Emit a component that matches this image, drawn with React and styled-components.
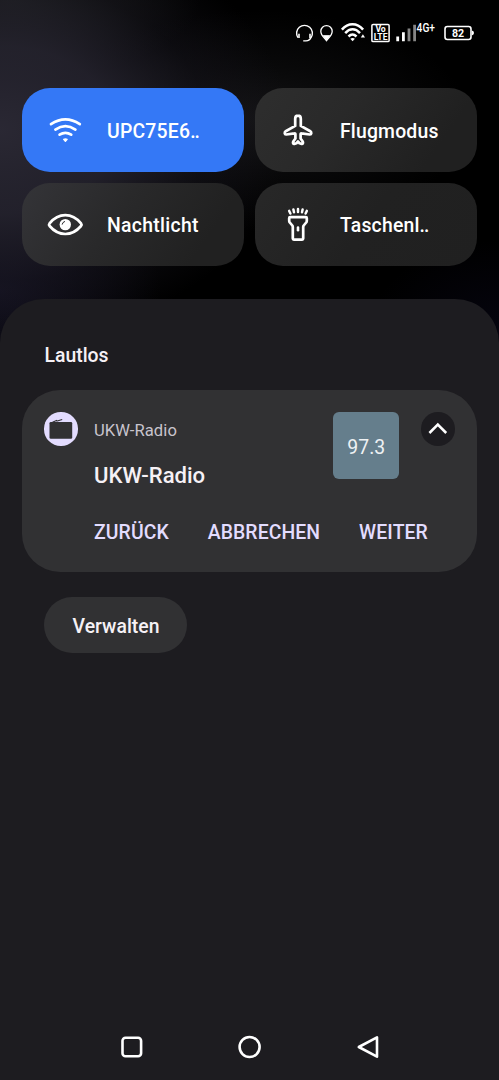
import React from 'react';
import styled, { createGlobalStyle } from 'styled-components';

const GlobalStyle = createGlobalStyle`
  * { box-sizing: border-box; }
  body {
    margin: 0;
    background: #1d1c20;
    font-family: Roboto, "Liberation Sans", sans-serif;
    -webkit-font-smoothing: antialiased;
  }
  svg { display: block; flex: none; }
  button {
    border: 0;
    padding: 0;
    background: none;
    font: inherit;
    color: inherit;
  }
`;

const Screen = styled.div`
  width: 499px;
  height: 1080px;
  overflow: hidden;
  display: flex;
  flex-direction: column;
  color: #fff;
  background:
    radial-gradient(ellipse 290px 210px at 0px 130px, rgba(44, 42, 54, 0.95) 0%, rgba(40, 38, 50, 0.82) 40%, rgba(26, 24, 34, 0.4) 72%, transparent 100%),
    radial-gradient(ellipse 210px 110px at 260px 120px, rgba(26, 26, 28, 0.75) 0%, rgba(18, 18, 20, 0.45) 50%, transparent 100%),
    radial-gradient(ellipse 160px 120px at 0px 290px, rgba(24, 22, 40, 0.8) 0%, transparent 100%),
    radial-gradient(ellipse 190px 80px at 10px 0px, rgba(34, 36, 36, 0.8) 0%, transparent 100%),
    radial-gradient(ellipse 130px 90px at 499px 330px, rgba(6, 5, 16, 0.9) 0%, transparent 100%),
    #000;
`;

const StatusBar = styled.header`
  height: 88px;
  flex: none;
  display: flex;
  justify-content: flex-end;
  align-items: flex-start;
  padding: 23px 24px 0 0;
`;

const StatusIcon = styled.svg`
  height: 20px;
  width: ${(p) => p.$w}px;
  margin-left: ${(p) => p.$gap || 0}px;
  overflow: visible;
  fill: none;
  stroke: #fff;
`;

const StatusText = styled.text`
  fill: #fff;
  stroke: none;
  font-weight: ${(p) => p.$weight || 700};
  font-size: ${(p) => p.$size}px;
`;

const TileGrid = styled.section`
  flex: none;
  display: grid;
  grid-template-columns: 222px 222px;
  grid-template-rows: 84px 83px;
  gap: 11px;
  padding: 0 22px;
`;

const tileFills = {
  active: '#3478f6',
  left: 'linear-gradient(125deg, #343438 0%, #29292a 42%, #212121 80%)',
  top: 'linear-gradient(125deg, #2e2e2e 0%, #292929 38%, #202020 80%)',
  plain: 'linear-gradient(125deg, #282828 0%, #212121 50%, #202020 100%)',
};

const Tile = styled.button`
  display: flex;
  align-items: center;
  border-radius: 28px;
  padding-left: 21px;
  background: ${(p) => tileFills[p.$fill]};
`;

const TileIcon = styled.svg`
  width: 44px;
  height: 44px;
  fill: none;
  stroke: #fff;
  stroke-width: 2.7;
  stroke-linecap: round;
  stroke-linejoin: round;
`;

const TileLabel = styled.span`
  margin-left: 20px;
  padding-top: 2.4px;
  font-size: 19.4px;
  font-weight: 500;
  letter-spacing: ${(p) => p.$spacing ?? 0.3}px;
  white-space: nowrap;
`;

const Dots = styled.span`
  letter-spacing: -1.1px;
`;

const Sheet = styled.main`
  flex: 1;
  margin-top: 33px;
  border-radius: 44px 44px 0 0;
  background: #1d1c20;
  display: flex;
  flex-direction: column;
  align-items: flex-start;
`;

const SectionTitle = styled.h2`
  margin: 45px 0 0 44.5px;
  font-size: 19.4px;
  line-height: 24px;
  font-weight: 500;
  color: #f6f1f6;
`;

const Notification = styled.article`
  width: 455px;
  height: 182px;
  margin: 22.4px 0 0 22px;
  padding: 22px 22px 0;
  border-radius: 38px;
  background: #313133;
  display: grid;
  grid-template-columns: 50px 238.5px 66.5px 33px;
  grid-template-rows: 97px 46px;
`;

const AppBadge = styled.div`
  width: 33.5px;
  height: 33.5px;
  border-radius: 50%;
  background: #e3dcff;
`;

const NotificationText = styled.div`
  display: flex;
  flex-direction: column;
`;

const AppName = styled.span`
  margin-top: 6.6px;
  font-size: 16.6px;
  line-height: 24px;
  letter-spacing: 0.1px;
  color: #c8c4cd;
`;

const NotificationTitle = styled.h3`
  margin: 18.2px 0 0;
  font-size: 22.1px;
  line-height: 28px;
  font-weight: 500;
  color: #f6f1f6;
`;

const Frequency = styled.div`
  height: 66.5px;
  border-radius: 6px;
  background: #657e8c;
  display: flex;
  align-items: center;
  justify-content: center;
  padding: 3.6px 0 0 1px;
  font-size: 19.4px;
  color: #eef1f3;
`;

const CollapseButton = styled.button`
  width: 33.5px;
  height: 33.5px;
  margin-left: 22px;
  border-radius: 50%;
  background: #1d1c20;
`;

const Actions = styled.div`
  grid-column: 2 / -1;
  display: flex;
  align-items: center;
  gap: 38.9px;
`;

const Action = styled.button`
  font-size: 19.4px;
  font-weight: 500;
  letter-spacing: 0.1px;
  color: #e3dcff;
  white-space: nowrap;
`;

const ManageButton = styled.button`
  width: 143px;
  height: 55.6px;
  margin: 25px 0 0 44px;
  padding: 2px 0 0 1px;
  border-radius: 28px;
  background: #313133;
  font-size: 19.4px;
  font-weight: 500;
  color: #f6f1f6;
`;

const NavBar = styled.nav`
  width: 100%;
  height: 67px;
  margin-top: auto;
  display: flex;
  justify-content: center;
  align-items: center;
  gap: 94px;
`;

const NavIcon = styled.svg`
  width: 24px;
  height: 24px;
  fill: none;
  stroke: #fff;
  stroke-width: 2.6;
  stroke-linejoin: round;
`;

function StatusIcons() {
  return (
    <StatusBar>
      <StatusIcon $w={17} viewBox="0 0 17 20" strokeWidth="1.4">
        <path d="M1.9 14.6A7.9 7.9 0 1 1 15.1 14.6" />
        <path d="M3 10.8v4.2M14 10.8v4.2" strokeWidth="1.6" />
        <path d="M15.1 14.3C14.2 16.8 12.6 17.9 10 17.9H7.2" />
      </StatusIcon>
      <StatusIcon $w={13} $gap={6.5} viewBox="0 0 13 20" strokeWidth="1.3">
        <path d="M6.5 17.6C5 15.4.8 12.6.8 8.3a5.7 5.7 0 0 1 11.4 0c0 4.3-4.2 7.1-5.7 9.3z" />
        <path d="M3.2 12.6h6.6L6.5 17.4z" fill="#fff" strokeWidth=".8" />
      </StatusIcon>
      <StatusIcon $w={24} $gap={8.5} viewBox="0 0 24 20" strokeWidth="2.5">
        <path d="M.9 6.6C7-.6 16-.6 22.1 6.6" />
        <path d="M4.2 10.1c4.6-5.1 10.2-5.1 14.8 0" />
        <path d="M7.5 13.5c2.7-2.7 5.3-2.7 8 0" />
        <path d="M9.3 15.8q2.3-1.6 4.6 0l-2.3 2.5z" fill="#fff" stroke="none" />
        <path d="M19.8 14.6h4.2l-2.1-3.4z" fill="#fff" stroke="none" />
      </StatusIcon>
      <StatusIcon $w={19} $gap={6} viewBox="0 0 19 20" strokeWidth="1.5">
        <rect x=".9" y="1.4" width="17.2" height="17.2" rx="1.2" />
        <StatusText $size={8.2} x="4.4" y="8.9" textLength="10.4" lengthAdjust="spacingAndGlyphs">Vo</StatusText>
        <StatusText $size={9} x="2.7" y="17" textLength="13.8" lengthAdjust="spacingAndGlyphs">LTE</StatusText>
      </StatusIcon>
      <StatusIcon $w={40} $gap={6} viewBox="0 0 40 20" strokeWidth="2.8">
        <path d="M1.7 18.3v-4.8M7.4 18.3v-9" />
        <path d="M13 18.3V5.6M18.6 18.3V1.8" stroke="#858585" />
        <StatusText $size={12.2} $weight={500} x="20.6" y="9" textLength="18.4" lengthAdjust="spacingAndGlyphs">4G+</StatusText>
      </StatusIcon>
      <StatusIcon $w={31} $gap={8} viewBox="0 0 31 20" strokeWidth="1.6">
        <rect x="1" y="3.5" width="26" height="13" rx="2.4" />
        <path d="M27.8 7.6q2.2.4 2.2 2.4t-2.2 2.4z" fill="#fff" stroke="none" />
        <StatusText $size={11.2} x="8" y="14.1" textLength="12.2" lengthAdjust="spacingAndGlyphs">82</StatusText>
      </StatusIcon>
    </StatusBar>
  );
}

const WifiIcon = () => (
  <TileIcon viewBox="0 0 44 44">
    <path d="M8 16.2q14.4-9.6 28.8 0" />
    <path d="M12.4 21.6q10-6.8 20 0" />
    <path d="M16.6 26.7q5.8-3.8 11.6 0" />
    <path d="M20.7 31.4q1.7-.9 3.4 0l-1.7 1.9z" fill="#fff" strokeWidth="1.4" />
  </TileIcon>
);

const PlaneIcon = () => (
  <TileIcon viewBox="0 0 44 44">
    <path d="M22 7.7c-1.9 0-2.8 1.2-2.8 3v7.2L9.7 23.2c-1.5.9-1.3 3.4.5 3.3l8.4-1.2c.5-.1.8.2.8.7v4.4l-2.1 3.1c-.7 1.3-.2 2.5 1 2.4l2.1-.6 1.6-1.8 1.6 1.8 2.1.6c1.2.1 1.7-1.1 1-2.4l-2.1-3.1V26c0-.5.3-.8.8-.7l8.4 1.2c1.8.1 2-2.4.5-3.3l-9.5-5.3v-7.2c0-1.8-.9-3-2.8-3z" />
  </TileIcon>
);

const EyeIcon = () => (
  <TileIcon viewBox="0 0 44 44">
    <path d="M6.6 20.4C11.2 14.8 16 12.2 22.3 12.2S33.4 14.8 38 20.4q1 1.3 0 2.6C33.4 28.4 28.6 31 22.3 31S11.2 28.4 6.6 23q-1-1.3 0-2.6z" />
    <circle cx="22.3" cy="21.6" r="5.7" fill="#fff" stroke="none" />
    <path d="M19.2 21.2q.3-2.1 2.4-2.7" stroke="#2a2a2c" strokeWidth="1" />
  </TileIcon>
);

const TorchIcon = () => (
  <TileIcon viewBox="0 0 44 44">
    <path d="M14.2 14.2h15.6q1 0 1 1v2.5q0 1-.6 1.8l-2.5 3q-.5.7-.5 1.6v11.5q0 1-1 1h-8.4q-1 0-1-1V24.1q0-.9-.5-1.6l-2.5-3q-.6-.8-.6-1.8v-2.5q0-1 1-1z" />
    <path d="M22 24.6v2.6" strokeWidth="2.6" />
    <path d="M13.2 7.9l1.2 2.6M17.4 6.5l.6 2.8M22 6.1v3M26.6 6.5l-.6 2.8M30.8 7.9l-1.2 2.6" strokeWidth="2.5" />
  </TileIcon>
);

export default function App() {
  return (
    <Screen>
      <GlobalStyle />
      <StatusIcons />
      <TileGrid>
        <Tile $fill="active"><WifiIcon /><TileLabel $spacing={0.2}>UPC75E6<Dots>..</Dots></TileLabel></Tile>
        <Tile $fill="top"><PlaneIcon /><TileLabel $spacing={0.18}>Flugmodus</TileLabel></Tile>
        <Tile $fill="left"><EyeIcon /><TileLabel>Nachtlicht</TileLabel></Tile>
        <Tile $fill="plain"><TorchIcon /><TileLabel $spacing={0.2}>Taschenl<Dots>..</Dots></TileLabel></Tile>
      </TileGrid>
      <Sheet>
        <SectionTitle>Lautlos</SectionTitle>
        <Notification>
          <AppBadge>
            <svg width="33.5" height="33.5" viewBox="0 0 33.5 33.5">
              <rect x="5.5" y="10" width="22.7" height="16.8" rx="1.3" fill="#313133" />
              <path d="M8.5 10.2L13 8.3M12.5 9.3L18.2 7.5" stroke="#313133" strokeWidth="1.2" />
            </svg>
          </AppBadge>
          <NotificationText>
            <AppName>UKW-Radio</AppName>
            <NotificationTitle>UKW-Radio</NotificationTitle>
          </NotificationText>
          <Frequency>97.3</Frequency>
          <CollapseButton aria-label="Einklappen">
            <svg width="33" height="33" viewBox="0 0 33 33">
              <path d="M8.4 20l8.4-8.4L25.2 20" fill="none" stroke="#fff" strokeWidth="2.5" />
            </svg>
          </CollapseButton>
          <Actions>
            <Action>ZURÜCK</Action>
            <Action>ABBRECHEN</Action>
            <Action>WEITER</Action>
          </Actions>
        </Notification>
        <ManageButton>Verwalten</ManageButton>
        <NavBar>
          <NavIcon viewBox="0 0 24 24"><rect x="2.5" y="2.7" width="18.6" height="18.6" rx="3" /></NavIcon>
          <NavIcon viewBox="0 0 24 24"><circle cx="11.6" cy="12" r="10" /></NavIcon>
          <NavIcon viewBox="0 0 24 24"><path d="M21 2.3v19.4L2.8 12z" /></NavIcon>
        </NavBar>
      </Sheet>
    </Screen>
  );
}
